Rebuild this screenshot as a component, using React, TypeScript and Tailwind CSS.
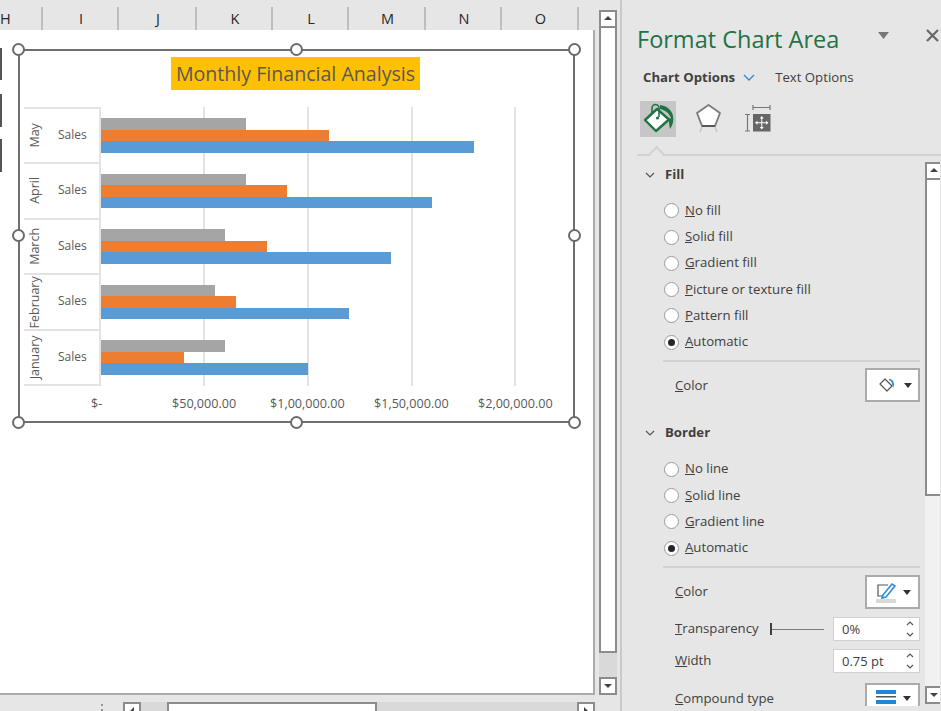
import React from 'react';

const font = "font-['Open_Sans','Noto_Sans',sans-serif]";

const columns = [
  { name: 'H', width: 43, className: 'pl-[0px] text-left' },
  { name: 'I', width: 76, className: 'pl-[2px] text-center' },
  { name: 'J', width: 78, className: 'pl-[2px] text-center' },
  { name: 'K', width: 76, className: 'pl-[2px] text-center' },
  { name: 'L', width: 76, className: 'pl-[2px] text-center' },
  { name: 'M', width: 77, className: 'pl-[2px] text-center' },
  { name: 'N', width: 76, className: 'pl-[2px] text-center' },
  { name: 'O', width: 77, className: 'pl-[2px] text-center' },
];

const months = [
  { name: 'May', gray: 70000, orange: 110000, blue: 180000 },
  { name: 'April', gray: 70000, orange: 90000, blue: 160000 },
  { name: 'March', gray: 60000, orange: 80000, blue: 140000 },
  { name: 'February', gray: 55000, orange: 65000, blue: 120000 },
  { name: 'January', gray: 60000, orange: 40000, blue: 100000 },
];

const toPx = (value: number) => (value / 100000) * 207;

function Handle({ className }: { className: string }) {
  return <span className={`absolute h-[13px] w-[13px] rounded-full border-2 border-[#6b6b6b] bg-white ${className}`} />;
}

function Bar({ value, color }: { value: number; color: string }) {
  return <div className={`h-[11.5px] ${color}`} style={{ width: toPx(value) }} />;
}

function Chart() {
  return (
    <div className="relative ml-[18px] mt-[19px] h-[374px] w-[557px] border-2 border-[#6f6f6f] bg-white">
      <Handle className="-left-[8px] -top-[8px]" />
      <Handle className="left-[270px] -top-[8px]" />
      <Handle className="-right-[8px] -top-[8px]" />
      <Handle className="-left-[8px] top-[178px]" />
      <Handle className="-right-[8px] top-[178px]" />
      <Handle className="-left-[8px] -bottom-[8px]" />
      <Handle className="left-[270px] -bottom-[8px]" />
      <Handle className="-right-[8px] -bottom-[8px]" />

      <div className="flex justify-center pt-[6px]">
        <div className="ml-[-2px] flex h-[33px] w-[249px] items-center justify-center bg-[#ffc000] text-[19.6px] text-[#595959]">
          Monthly Financial Analysis
        </div>
      </div>

      <div className="relative ml-[4px] mt-[17px] flex w-[500px]">
        <div className="flex w-[75px] flex-col">
          {months.map((m) => (
            <div key={m.name} className="flex h-[55.6px] items-center border-b-2 border-t-0 border-[#e3e3e3] first:h-[57px] first:border-t-2">
              <div className="flex w-[22px] justify-center">
                <span className="whitespace-nowrap text-[12.5px] text-[#595959] [transform:rotate(-90deg)]">{m.name}</span>
              </div>
              <span className="mb-[1px] ml-[12px] text-[12px] text-[#595959]">Sales</span>
            </div>
          ))}
        </div>
        <div className="relative flex-1 border-l-2 border-[#e3e3e3]">
          <span className="absolute inset-y-0 left-[102px] w-[2px] bg-[#e3e3e3]" />
          <span className="absolute inset-y-0 left-[206px] w-[2px] bg-[#e3e3e3]" />
          <span className="absolute inset-y-0 left-[310px] w-[2px] bg-[#e3e3e3]" />
          <span className="absolute inset-y-0 left-[413px] w-[2px] bg-[#e3e3e3]" />
          <div className="relative flex flex-col">
            {months.map((m) => (
              <div key={m.name} className="h-[55.6px] pt-[11px]">
                <Bar value={m.gray} color="bg-[#a5a5a5]" />
                <Bar value={m.orange} color="bg-[#ed7d31]" />
                <Bar value={m.blue} color="bg-[#5b9bd5]" />
              </div>
            ))}
          </div>
        </div>
      </div>

      <div className="relative mt-[9px] flex text-[12.6px] text-[#595959]">
        <span className="ml-[71px] w-[81px]">$-</span>
        <span className="w-[98px]">$50,000.00</span>
        <span className="w-[104px]">$1,00,000.00</span>
        <span className="w-[104px]">$1,50,000.00</span>
        <span>$2,00,000.00</span>
      </div>
    </div>
  );
}

function ScrollButton({ dir, className = '' }: { dir: 'up' | 'down' | 'left' | 'right'; className?: string }) {
  const d = { up: 'M2 7l4-4 4 4z', down: 'M2 4l4 4 4-4z', left: 'M8 2L4 6l4 4z', right: 'M4 2l4 4-4 4z' }[dir];
  return (
    <div className={`flex items-center justify-center border-2 border-[#8c8c8c] bg-white ${className}`}>
      <svg width="12" height="12" viewBox="0 0 12 12"><path d={d} fill="#444" /></svg>
    </div>
  );
}

function Radio({ u, rest, checked }: { u: string; rest: string; checked?: boolean }) {
  return (
    <div className="flex h-[26.3px] items-center pl-[27px]">
      <span className="flex h-[15px] w-[15px] items-center justify-center rounded-full border border-[#9a9a9a] bg-white">
        {checked && <span className="h-[7px] w-[7px] rounded-full bg-[#262626]" />}
      </span>
      <span className="ml-[6px] text-[13.2px] text-[#404040]"><u>{u}</u>{rest}</span>
    </div>
  );
}

function SectionTitle({ title }: { title: string }) {
  return (
    <div className="flex items-center pl-[7px] text-[13.2px] font-bold text-[#404040]">
      <svg width="12" height="12" viewBox="0 0 12 12" fill="none" stroke="#555" strokeWidth="1.2"><path d="M2 4l4 4 4-4" /></svg>
      <span className="ml-[9px]">{title}</span>
    </div>
  );
}

function Spin({ value, className = '' }: { value: string; className?: string }) {
  return (
    <div className={`flex h-[24px] w-[87px] items-center justify-between border border-[#d0d0d0] bg-white pl-[8px] pr-[3px] text-[13px] text-[#404040] ${className}`}>
      <span>{value}</span>
      <svg width="12" height="20" viewBox="0 0 12 20" fill="none" stroke="#555" strokeWidth="1.2"><path d="M3 6l3-3 3 3M3 14l3 3 3-3" /></svg>
    </div>
  );
}

function Caret() {
  return <svg width="8" height="5" viewBox="0 0 8 5"><path d="M0 0h8L4 5z" fill="#333" /></svg>;
}

function SmallBucket() {
  return (
    <svg width="18" height="18" viewBox="0 0 18 18">
      <path d="M7 3l7 7-5 5-7-7z" fill="#fff" stroke="#555" strokeWidth="1.2" strokeLinejoin="round" />
      <path d="M11 3c3 0 5 2 5 6l-1 3-1-4c0-2-1-3-3-4z" fill="#2e8ed4" />
    </svg>
  );
}

function PaneFillIcon() {
  return (
    <svg width="36" height="36" viewBox="0 0 36 36">
      <path d="M17 8L29 18.500 16 30 5 19z" fill="#fff" stroke="#217346" strokeWidth="2.4" strokeLinejoin="round" />
      <path d="M12 13V7a3.500 3.500 0 0 1 7 0v9" fill="none" stroke="#217346" strokeWidth="1.6" />
      <circle cx="17.500" cy="17" r="1.600" fill="#217346" />
      <path d="M20 4c7 1 12 5 13 11 1 4 0 9-3 13-1-4-1-7-1-10l2-1c-2-5-6-8-11-9z" fill="#217346" />
    </svg>
  );
}

function PaneEffectsIcon() {
  return (
    <svg className="ml-[19px]" width="28" height="31" viewBox="0 0 28 31" fill="#fff">
      <path d="M13.500 2L25 10l-5 13H7L2 10z" stroke="#7a7a7a" strokeWidth="1.800" strokeLinejoin="round" />
      <path d="M7 23h13" stroke="#555" strokeWidth="1.800" />
      <path d="M7 24l-2 5M20 24l2 5" stroke="#c4c4c4" strokeWidth="1.400" fill="none" />
    </svg>
  );
}

function PaneSizeIcon() {
  return (
    <svg className="ml-[21px]" width="28" height="28" viewBox="0 0 28 28">
      <path d="M9 2.500h17M9 0v5M26 0v5M1 9.500h5M1 26h5M3.500 9.500V26" stroke="#777" strokeWidth="1.200" fill="none" />
      <rect x="9" y="9" width="17.500" height="17.500" fill="#666" />
      <path d="M17.750 12.500v10.500M12.500 17.750h10.500" stroke="#fff" strokeWidth="1" />
      <path d="M17.750 11l-2 2.500h4zM17.750 24.500l-2-2.500h4zM11 17.750l2.500-2v4zM24.500 17.750l-2.500-2v4z" fill="#fff" />
    </svg>
  );
}

export default function App() {
  return (
    <div className={`flex h-[711px] w-[941px] overflow-hidden bg-[#e6e6e6] ${font}`}>
      <div className="flex w-[595px] flex-col">
        <div className="flex h-[30px] shrink-0 pt-[7px] text-[14.500px] leading-[23px] text-[#262626]">
          {columns.map((c) => (
            <div key={c.name} className={`shrink-0 border-r-2 border-[#bdbdbd] ${c.className}`} style={{ width: c.width }}>
              {c.name}
            </div>
          ))}
        </div>
        <div className="relative h-[665px] shrink-0 border-b-2 border-r-2 border-[#ababab] bg-white">
          <span className="absolute left-0 top-[18px] h-[32px] w-[2px] bg-[#555]" />
          <span className="absolute left-0 top-[64px] h-[33px] w-[2px] bg-[#555]" />
          <span className="absolute left-0 top-[109px] h-[33px] w-[2px] bg-[#555]" />
          <Chart />
        </div>
        <div className="relative flex h-[16px] shrink-0 items-start pt-[7px]">
          <span className="ml-[101px] mt-[2px] h-[7px] w-[2px] border-y-2 border-[#999]" />
          <ScrollButton dir="left" className="ml-[20px] h-[18px] w-[18px]" />
          <div className="flex h-[18px] flex-1 bg-[#d9d9d9] pl-[26px]">
            <div className="h-[18px] w-[210px] border-2 border-[#8c8c8c] bg-white" />
          </div>
          <ScrollButton dir="right" className="h-[18px] w-[18px]" />
        </div>
      </div>

      <div className="ml-[4px] flex w-[18px] flex-col pt-[10px]">
        <ScrollButton dir="up" className="h-[18px] w-[18px]" />
        <div className="h-[625px] border-x-2 border-b-2 border-[#8c8c8c] bg-white" />
        <div className="h-[24px] bg-[#d9d9d9]" />
        <ScrollButton dir="down" className="h-[18px] w-[18px]" />
      </div>

      <div className="ml-[3px] flex min-w-0 flex-1 flex-col border-l-2 border-[#c9c9c9] pt-[23px]">
        <div className="flex items-start pl-[15px]">
          <span className="text-[23.5px] leading-[32px] text-[#217346]">Format Chart Area</span>
          <svg className="ml-[39px] mt-[9px]" width="11" height="7" viewBox="0 0 11 7"><path d="M0 0h11L5.500 7z" fill="#777" /></svg>
          <svg className="ml-[37px] mt-[6px]" width="13" height="13" viewBox="0 0 13 13" stroke="#666" strokeWidth="2.200"><path d="M1 1l11 11M12 1L1 12" /></svg>
        </div>
        <div className="mt-[13px] flex items-center pl-[21px] text-[13.2px] text-[#404040]">
          <span className="font-bold">Chart Options</span>
          <svg className="ml-[7px]" width="14" height="12" viewBox="0 0 14 12" fill="none" stroke="#2e8ed4" strokeWidth="1.400"><path d="M2 3l5 5 5-5" /></svg>
          <span className="ml-[19px]">Text Options</span>
        </div>
        <div className="mt-[13px] flex items-center pl-[18px]">
          <div className="flex h-[36px] w-[36px] items-center justify-center bg-[#c6c6c6]">
            <PaneFillIcon />
          </div>
          <PaneEffectsIcon />
          <PaneSizeIcon />
        </div>
        <div className="relative ml-[15px] mt-[17px] h-[2px] bg-[#d2d2d2]">
          <span className="absolute -top-[6px] left-[14px] h-[11px] w-[11px] rotate-45 border-l-2 border-t-2 border-[#d2d2d2] bg-[#e6e6e6]" />
        </div>
        <div className="mb-[5px] flex min-h-0 flex-1">
          <div className="w-[303px] shrink-0 overflow-hidden pl-[15px] pt-[9px]">
            <SectionTitle title="Fill" />
            <div className="mt-[13px]">
              <Radio u="N" rest="o fill" />
              <Radio u="S" rest="olid fill" />
              <Radio u="G" rest="radient fill" />
              <Radio u="P" rest="icture or texture fill" />
              <Radio u="P" rest="attern fill" />
              <Radio u="A" rest="utomatic" checked />
            </div>
            <div className="ml-[26px] mr-[5px] mt-[5px] h-[2px] bg-[#d2d2d2]" />
            <div className="mt-[6px] flex items-center justify-between pl-[38px] pr-[5px] text-[13.2px] text-[#404040]">
              <span className="mt-[2px]"><u>C</u>olor</span>
              <div className="flex h-[34px] w-[55px] items-center justify-center gap-[8px] border-2 border-[#ababab] bg-white pl-[4px]">
                <SmallBucket />
                <Caret />
              </div>
            </div>
            <div className="mt-[21px]"><SectionTitle title="Border" /></div>
            <div className="mt-[13px]">
              <Radio u="N" rest="o line" />
              <Radio u="S" rest="olid line" />
              <Radio u="G" rest="radient line" />
              <Radio u="A" rest="utomatic" checked />
            </div>
            <div className="ml-[26px] mr-[5px] mt-[5px] h-[2px] bg-[#d2d2d2]" />
            <div className="mt-[7px] flex items-center justify-between pl-[38px] pr-[5px] text-[13.2px] text-[#404040]">
              <span><u>C</u>olor</span>
              <div className="flex h-[34px] w-[55px] items-center justify-center gap-[7px] border-2 border-[#ababab] bg-white pl-[2px]">
                <svg width="20" height="22" viewBox="0 0 20 22">
                  <path d="M12 4H2v11h4" fill="none" stroke="#555" strokeWidth="1.200" />
                  <path d="M7 14l9-11 3 2-9 11-4 1z" fill="#fff" stroke="#2e8ed4" strokeWidth="1.600" />
                  <rect y="18" width="20" height="4" fill="#d9d9d9" />
                </svg>
                <Caret />
              </div>
            </div>
            <div className="mt-[8px] flex items-center pl-[38px] pr-[5px] text-[13.2px] text-[#404040]">
              <span><u>T</u>ransparency</span>
              <span className="ml-[11px] h-[12px] w-[2px] bg-[#404040]" />
              <span className="h-px w-[52px] bg-[#7a7a7a]" />
              <Spin value="0%" className="ml-auto" />
            </div>
            <div className="mt-[8px] flex items-center justify-between pl-[38px] pr-[5px] text-[13.2px] text-[#404040]">
              <span><u>W</u>idth</span>
              <Spin value="0.75 pt" />
            </div>
            <div className="mt-[10px] flex items-start justify-between pl-[38px] pr-[5px] text-[13.2px] text-[#404040]">
              <span className="mt-[6px]"><u>C</u>ompound type</span>
              <div className="flex h-[34px] w-[55px] items-start justify-center gap-[7px] border-2 border-[#ababab] bg-white pl-[2px] pt-[4px]">
                <svg width="20" height="22" viewBox="0 0 20 22">
                  <path d="M0 1h20v4H0zM0 11h20v4H0z" fill="#1f87d6" />
                  <path d="M0 7h20v1.500H0zM0 17h20v1.500H0z" fill="#555" />
                </svg>
                <svg className="mt-[7px]" width="8" height="5" viewBox="0 0 8 5"><path d="M0 0h8L4 5z" fill="#333" /></svg>
              </div>
            </div>
          </div>
          <div className="flex w-[15px] shrink-0 flex-col pb-[2px] pt-[6px]">
            <ScrollButton dir="up" className="h-[18px] w-[15px] border-r-0" />
            <div className="h-[316px] border-b-2 border-l-2 border-[#8c8c8c] bg-white" />
            <div className="flex-1 bg-[#f1f1f1]" />
            <ScrollButton dir="down" className="h-[18px] w-[15px] border-r-0" />
          </div>
        </div>
      </div>
    </div>
  );
}
